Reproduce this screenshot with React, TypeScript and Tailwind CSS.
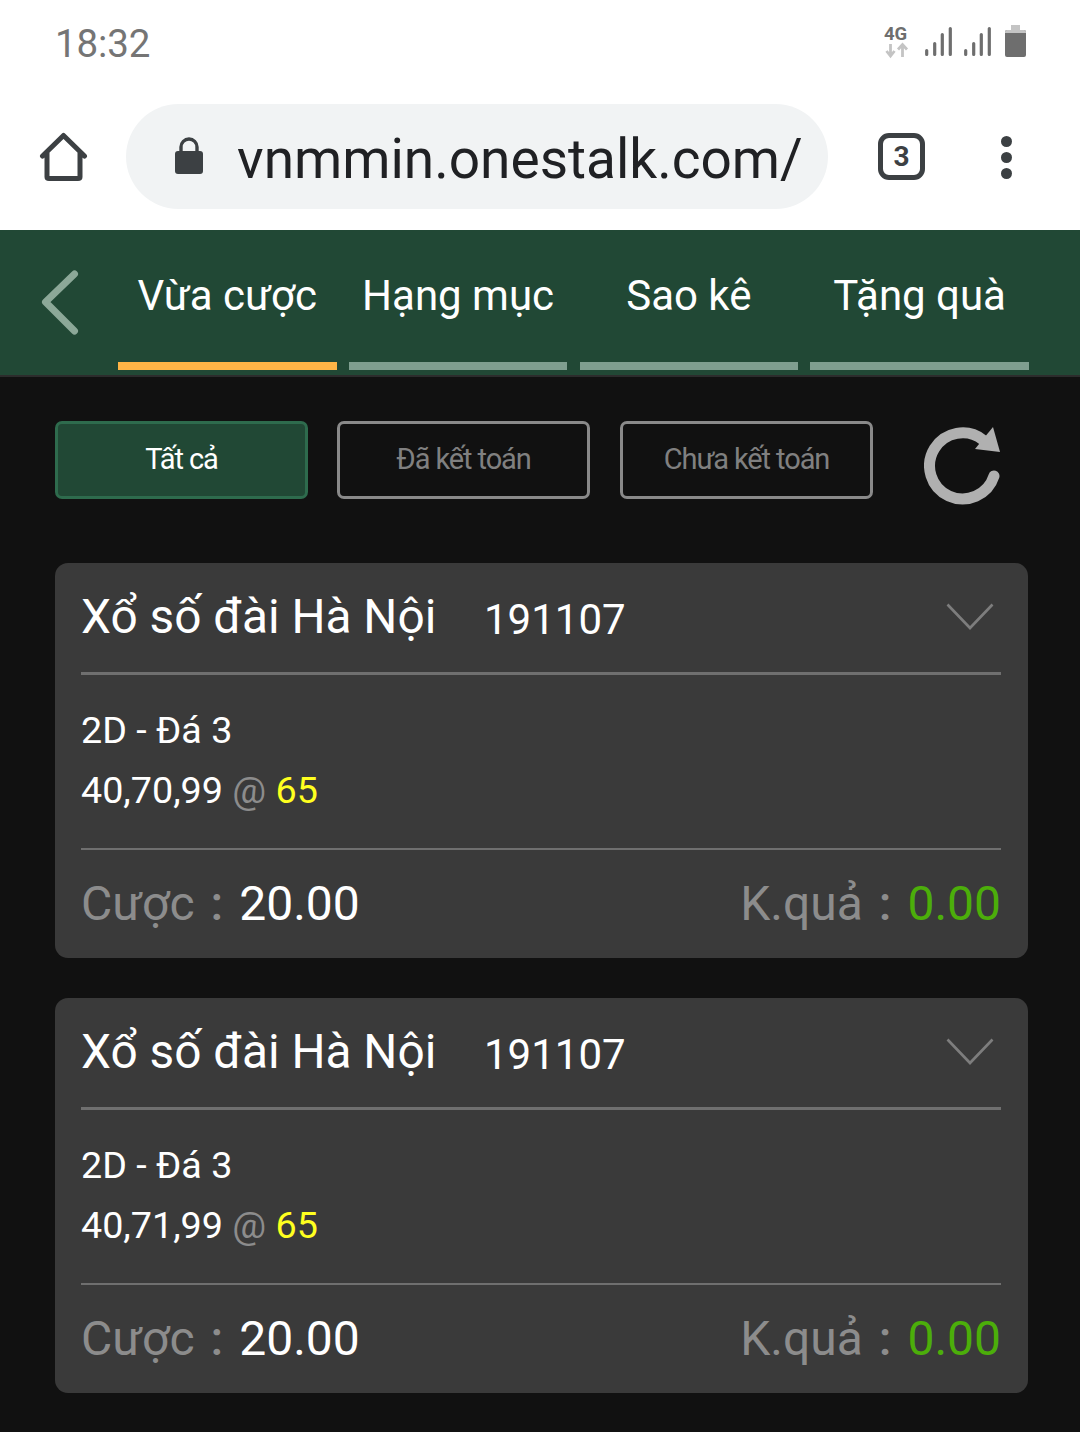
const font = { fontFamily: "Roboto, 'Noto Sans', sans-serif" };

function Card({ nums }: { nums: string }) {
  return (
    <div className="w-[973px] h-[395px] rounded-[13px] bg-[#3a3a3a] pl-[26px] pr-[27px] flex flex-col">
      <div className="h-[112px] flex items-center border-b-[3px] border-[#6f6f6f] pt-[1px]">
        <span className="text-[47.8px] leading-none text-white w-[403px] whitespace-nowrap">Xổ số đài Hà Nội</span>
        <span className="text-[42px] leading-none text-white mt-[3px]">191107</span>
        <svg className="ml-auto mr-[7px] mb-[3px]" width="48" height="28" viewBox="0 0 48 28" fill="none">
          <path d="M1.5 1.5 L24 25 L46.5 1.5" stroke="#7d7d7d" strokeWidth="2.6" />
        </svg>
      </div>
      <div className="h-[175px] border-b-2 border-[#6f6f6f] flex flex-col pt-[36px] gap-[22px]">
        <div className="text-[37.7px] leading-[38px] text-white">2D - Đá 3</div>
        <div className="text-[37.7px] leading-[38px] text-white whitespace-nowrap">
          {nums} <span className="text-[#8c8c8c]">@</span> <span className="text-[#ffff1f]">65</span>
        </div>
      </div>
      <div className="flex-1 flex items-center justify-between pb-[1px] text-[48px] leading-none whitespace-nowrap">
        <div className="flex items-center">
          <span className="text-[#8c8c8c]">Cược</span>
          <span className="text-[#8c8c8c] font-medium ml-[16px]">:</span>
          <span className="text-white ml-[16px]">20.00</span>
        </div>
        <div className="flex items-center">
          <span className="text-[#8c8c8c]">K.quả</span>
          <span className="text-[#8c8c8c] font-medium ml-[16px]">:</span>
          <span className="text-[#4cae0a] ml-[16px]">0.00</span>
        </div>
      </div>
    </div>
  );
}

export default function App() {
  const tabs = ["Vừa cược", "Hạng mục", "Sao kê", "Tặng quà"];
  return (
    <div style={font} className="w-[1080px] h-[1432px] overflow-hidden bg-[#111111] flex flex-col">
      {/* status bar */}
      <div className="h-[90px] bg-white flex items-start justify-between pl-[55px] pr-[50px] shrink-0">
        <span className="text-[38.5px] leading-none text-[#757575] mt-[25px] tracking-[-0.1px]">18:32</span>
        <svg className="mt-[24px]" width="146" height="36" viewBox="0 0 146 36" fill="none">
          <text x="0" y="15.5" fontFamily="Roboto" fontWeight="700" fontSize="18.5" fill="#6e6e6e">4G</text>
          <path d="M6.5 20 V31 M2.5 27 L6.5 32 L10.5 27" stroke="#c4c4c4" strokeWidth="2.8" />
          <path d="M18.5 33 V21 M14 25.5 L18.5 20.5 L23 25.5" stroke="#c4c4c4" strokeWidth="2.8" />
          <g stroke="#6e6e6e" strokeWidth="3.2" strokeLinecap="round">
            <path d="M42.7 26.5 V30.5 M50.7 19.5 V30.5 M58.3 10.5 V30.5 M66.3 4.5 V30.5" />
            <path d="M81.7 26.5 V30.5 M89.7 19.5 V30.5 M97.3 10.5 V30.5 M105.3 4.5 V30.5" />
          </g>
          <rect x="127" y="1" width="9" height="6" fill="#c4c4c4" />
          <rect x="121" y="6" width="21" height="27" rx="2" fill="#6e6e6e" />
          <path d="M121 9 V8 Q121 6 123 6 H140 Q142 6 142 8 V9 Z" fill="#c4c4c4" />
        </svg>
      </div>
      {/* browser bar */}
      <div className="h-[140px] bg-white flex items-start shrink-0 relative">
        <svg className="ml-[39px] mt-[42px]" width="50" height="50" viewBox="0 0 50 50" fill="none">
          <path d="M3.5 24 L24.5 3.5 L45.5 24 M8 21 V45 Q8 46.5 10 46.5 H39 Q41 46.5 41 45 V21" stroke="#3c4043" strokeWidth="5" strokeLinecap="round" strokeLinejoin="round" />
        </svg>
        <div className="ml-[37px] mt-[14px] w-[702px] h-[105px] rounded-full bg-[#f1f3f4] flex items-center overflow-hidden">
          <svg className="ml-[48px] shrink-0 mb-[2px]" width="30" height="38" viewBox="0 0 30 38" fill="none">
            <path d="M7 16 V10 A8 8 0 0 1 23 10 V16" stroke="#3c4043" strokeWidth="3.4" />
            <rect x="1" y="14" width="28" height="23" rx="3" fill="#3c4043" />
          </svg>
          <span className="ml-[34px] text-[55px] leading-none text-[#202124] whitespace-nowrap mt-[5px] -translate-x-[1px]">vnmmin.onestalk.com/</span>
        </div>
        <div className="ml-[50px] mt-[43px] w-[47px] h-[47px] rounded-[11px] border-[5px] border-[#3c4043] flex items-center justify-center text-[28px] font-bold leading-none text-[#3c4043]">3</div>
        <div className="ml-[76px] mt-[46px] flex flex-col gap-[5px]">
          <span className="w-[11px] h-[11px] rounded-full bg-[#3c4043]" />
          <span className="w-[11px] h-[11px] rounded-full bg-[#3c4043]" />
          <span className="w-[11px] h-[11px] rounded-full bg-[#3c4043]" />
        </div>
      </div>
      {/* tabs */}
      <div className="h-[147px] bg-[#214835] border-b-2 border-[#2c2c2c] flex shrink-0">
        <div className="w-[118px] flex items-start shrink-0">
          <svg className="ml-[40px] mt-[39px]" width="40" height="66" viewBox="0 0 40 66" fill="none">
            <path d="M34.5 5 L5.5 33 L34.5 62" stroke="#8ca898" strokeWidth="7" strokeLinecap="round" strokeLinejoin="round" />
          </svg>
        </div>
        <div className="flex gap-[12.2px]">
          {tabs.map((t, i) => (
            <div key={t} className="w-[218.6px] flex flex-col items-center">
              <div className="h-[132px] flex items-center justify-center text-[42px] leading-none text-white whitespace-nowrap">{t}</div>
              <div className={i === 0 ? "w-full h-[8px] bg-[#ffb546]" : "w-full h-[8px] bg-[#7f9e8f]"} />
            </div>
          ))}
        </div>
      </div>
      {/* filters */}
      <div className="h-[186px] flex items-start pl-[55px] shrink-0">
        <div className="mt-[44px] flex gap-[29px]">
          <div className="w-[253px] h-[78px] rounded-[7px] border-[3px] border-[#2e6b4d] bg-[#214835] flex items-center justify-center text-[29px] tracking-[-1.1px] text-white">Tất cả</div>
          <div className="w-[253px] h-[78px] rounded-[7px] border-[3px] border-[#8a8a8a] flex items-center justify-center text-[29px] tracking-[-1.1px] text-[#808080]">Đã kết toán</div>
          <div className="ml-[1px] w-[253px] h-[78px] rounded-[7px] border-[3px] border-[#8a8a8a] flex items-center justify-center text-[29px] tracking-[-1.1px] text-[#808080]">Chưa kết toán</div>
        </div>
        <svg className="ml-[51px] mt-[50px]" width="80" height="80" viewBox="0 0 80 80" fill="none">
          <path d="M70 49 A33 33 0 1 1 59 13" stroke="#b0b0b0" strokeWidth="11" strokeLinecap="round" />
          <path d="M69 0 L76 25 L51 22 Z" fill="#b0b0b0" />
        </svg>
      </div>
      {/* cards */}
      <div className="flex flex-col gap-[40px] pl-[55px]">
        <Card nums="40,70,99" />
        <Card nums="40,71,99" />
      </div>
    </div>
  );
}
